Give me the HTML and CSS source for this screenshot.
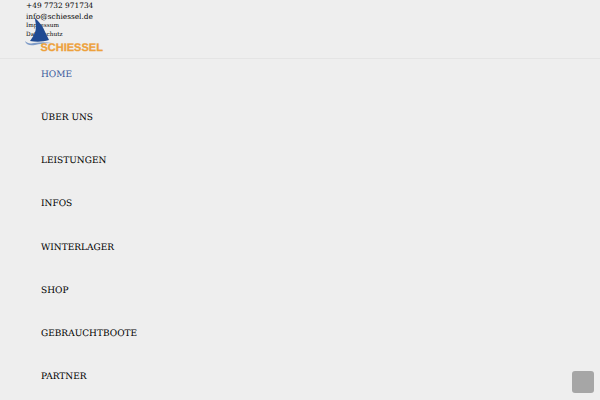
FILE: index.html
```html
<!DOCTYPE html>
<html lang="de">
<head>
    <meta charset="UTF-8">
    <title>Schiessel</title>
    <link rel="stylesheet" href="styles.css">
</head>
<body>
    <header class="header">
        <div class="contact">
            <a class="contact-line">+49 7732 971734</a>
            <a class="contact-line">info@schiessel.de</a>
            <a class="legal-line">Impressum</a>
            <a class="legal-line">Datenschutz</a>
        </div>
        <div class="logo">
            <svg class="logo-mark" width="30" height="30" viewBox="0 0 30 30">
                <path d="M10 0 C13 3 15 5 17 8 C19 11 21 16 24 22 C18 24 11 24 5 23 C8 19 11 14 11 9 C11 5 10 3 10 0 Z" fill="#1f4a93"/>
                <path d="M0 23 C2 25 5 26 9 25 C15 24 21 24 27 25 C20 25 14 26 10 27 C5 28 1 27 0 23 Z" fill="#7f9cc8"/>
            </svg>
            <span class="logo-text">SCHIESSEL</span>
        </div>
    </header>
    <nav class="nav">
        <a class="nav-item active">HOME</a>
        <a class="nav-item">ÜBER UNS</a>
        <a class="nav-item">LEISTUNGEN</a>
        <a class="nav-item">INFOS</a>
        <a class="nav-item">WINTERLAGER</a>
        <a class="nav-item">SHOP</a>
        <a class="nav-item">GEBRAUCHTBOOTE</a>
        <a class="nav-item">PARTNER</a>
    </nav>
    <div class="to-top"></div>
</body>
</html>
```

FILE: styles.css
```css
html, body {
    height: 100%;
    overflow: hidden;
}
body {
    margin: 0;
    background-color: #eeeeee;
    font-family: 'DejaVu Serif', serif;
    text-rendering: geometricPrecision;
    color: #000;
}
.header {
    position: relative;
    height: 58px;
    border-bottom: 1px solid #e4e4e4;
}
.contact {
    display: flex;
    flex-direction: column;
    padding-left: 26px;
}
.contact-line {
    font-size: 7.4px;
    line-height: 11px;
}
.legal-line {
    font-size: 5.8px;
    line-height: 8.5px;
}
.logo {
    position: absolute;
    left: 25px;
    top: 18px;
    width: 78px;
    height: 34px;
}
.logo-mark {
    position: absolute;
    left: 0;
    top: 0;
}
.logo-text {
    position: absolute;
    left: 15.5px;
    bottom: -2px;
    font-family: 'Liberation Sans', sans-serif;
    font-weight: bold;
    font-size: 11px;
    line-height: 11px;
    color: #eda13c;
    -webkit-text-stroke: 0.3px #eda13c;
}
.nav {
    display: flex;
    flex-direction: column;
    padding-left: 41px;
}
.nav-item {
    font-size: 9px;
    line-height: 32px;
    padding-bottom: 11.15px;
}
.nav-item.active {
    color: #3a5a9c;
}
.to-top {
    position: fixed;
    right: 6px;
    bottom: 7px;
    width: 22px;
    height: 22px;
    border-radius: 3px;
    background-color: #a6a6a6;
}
```
